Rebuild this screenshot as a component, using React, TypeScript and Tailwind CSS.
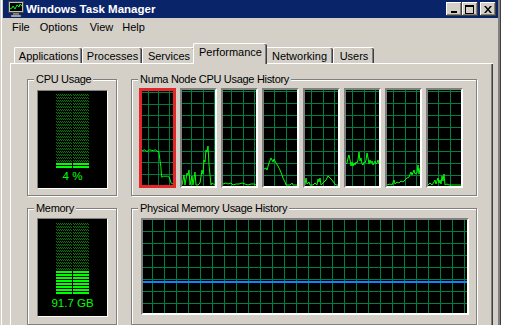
import React from 'react';

type Pt = [number, number];

// numa node history, local coords inside a 33x96 plot
const cpuHistory: { phase: number; pts: Pt[] }[] = [
  {
    phase: 6,
    pts: [[0, 61], [3, 60], [5, 62], [8, 60], [12, 61], [14, 60], [17, 62], [18, 62], [19, 70], [20, 77], [21, 88], [23, 87], [27, 87], [29, 88], [31, 94], [33, 95]],
  },
  {
    phase: 9,
    pts: [[0, 95], [2, 85], [3, 95], [5, 83], [6, 85], [7, 80], [8, 95], [10, 86], [11, 95], [13, 82], [14, 95], [16, 95], [18, 93], [20, 80], [21, 84], [22, 70], [23, 72], [24, 60], [25, 62], [26, 56], [27, 75], [28, 85], [29, 95], [30, 93], [33, 95]],
  },
  {
    phase: 8,
    pts: [[0, 94], [3, 93], [5, 94], [8, 93], [10, 95], [13, 94], [16, 94], [19, 93], [22, 94], [25, 95], [28, 94], [31, 94], [33, 95]],
  },
  {
    phase: 10,
    pts: [[0, 79], [2, 78], [3, 80], [5, 73], [7, 68], [8, 70], [9, 72], [10, 69], [12, 73], [14, 76], [16, 80], [18, 85], [19, 88], [21, 92], [22, 95], [26, 95], [28, 93], [29, 95], [33, 95]],
  },
  {
    phase: 6,
    pts: [[0, 95], [1, 88], [2, 94], [4, 92], [5, 95], [8, 95], [10, 93], [12, 95], [13, 89], [14, 92], [15, 88], [16, 95], [18, 93], [21, 90], [23, 86], [25, 88], [27, 90], [29, 93], [31, 95], [33, 95]],
  },
  {
    phase: 6,
    pts: [[0, 74], [1, 73], [2, 68], [3, 65], [4, 70], [5, 76], [6, 72], [7, 76], [8, 73], [9, 75], [10, 72], [11, 73], [12, 70], [13, 62], [14, 71], [15, 68], [16, 74], [17, 75], [18, 72], [19, 73], [20, 70], [21, 63], [22, 68], [23, 74], [24, 70], [25, 73], [26, 71], [27, 75], [28, 73], [29, 71], [30, 74], [31, 73], [32, 70], [33, 74]],
  },
  {
    phase: 6,
    pts: [[0, 95], [3, 94], [5, 95], [7, 90], [8, 94], [10, 92], [12, 93], [14, 91], [16, 92], [18, 90], [20, 88], [22, 87], [24, 82], [25, 85], [27, 80], [28, 84], [30, 83], [31, 75], [32, 84], [33, 78]],
  },
  {
    phase: 10,
    pts: [[0, 95], [2, 93], [4, 95], [6, 92], [7, 90], [8, 94], [10, 88], [11, 93], [12, 90], [13, 94], [14, 86], [15, 91], [16, 84], [17, 95], [19, 94], [21, 95], [33, 95]],
  },
];

function CpuGraph({ phase, pts, selected }: { phase: number; pts: Pt[]; selected?: boolean }) {
  return (
    <div
      className={`h-[100px] w-[37px] bg-black ${
        selected
          ? 'border-[3px] border-[#e3262a]'
          : 'border-2 border-t-[#808080] border-l-[#808080] border-r-white border-b-white'
      }`}
    >
      <svg viewBox="0 0 33 96" preserveAspectRatio="none" className="block h-full w-full">
        {[0, 1, 2].map(i => (
          <line key={'v' + i} x1={phase + 0.5 + i * 11.5} x2={phase + 0.5 + i * 11.5} y1={0} y2={96} stroke="#008040" shapeRendering="crispEdges" />
        ))}
        {[0, 1, 2, 3, 4, 5, 6, 7].map(i => (
          <line key={'h' + i} x1={0} x2={33} y1={1.5 + i * 12} y2={1.5 + i * 12} stroke="#008040" shapeRendering="crispEdges" />
        ))}
        <polyline points={pts.map(p => p.join(',')).join(' ')} fill="none" stroke="#00ff00" strokeWidth={1} />
      </svg>
    </div>
  );
}

function MemGraph() {
  return (
    <div className="h-[97px] w-[328px] border-2 border-t-[#808080] border-l-[#808080] border-r-white border-b-white bg-black">
      <svg width={324} height={93} className="block">
        {Array.from({ length: 27 }).map((_, i) => (
          <line key={'v' + i} x1={9.5 + i * 12} x2={9.5 + i * 12} y1={0} y2={93} stroke="#008040" shapeRendering="crispEdges" />
        ))}
        {Array.from({ length: 7 }).map((_, i) => (
          <line key={'h' + i} x1={0} x2={324} y1={11.5 + i * 12} y2={11.5 + i * 12} stroke="#008040" shapeRendering="crispEdges" />
        ))}
        <rect x={0} y={61} width={324} height={2} fill="#0a84ff" />
      </svg>
    </div>
  );
}

// one 2px bar row: lit = solid, otherwise a checkered dim row
function BarRow({ y, x, on }: { y: number; x: number; on: boolean }) {
  if (on) return <rect x={x} y={y} width={16} height={2} fill="#00ff00" />;
  return (
    <g stroke="#008000" strokeWidth={1} strokeDasharray="1 1">
      <line x1={x} x2={x + 16} y1={y + 0.5} y2={y + 0.5} />
      <line x1={x + 1} x2={x + 16} y1={y + 1.5} y2={y + 1.5} />
    </g>
  );
}

function Meter({ rows, lit, top, gap, label }: { rows: number; lit: number; top: string; gap: string; label: string }) {
  return (
    <div className="flex h-[99px] w-[71px] flex-col items-center border border-t-[#808080] border-l-[#808080] border-r-white border-b-white bg-black">
      <svg width={33} height={rows * 3} className={`block ${top}`} shapeRendering="crispEdges">
        {Array.from({ length: rows }).map((_, i) => {
          const on = i >= rows - lit;
          return (
            <g key={i}>
              <BarRow x={0} y={i * 3} on={on} />
              <BarRow x={17} y={i * 3} on={on} />
            </g>
          );
        })}
      </svg>
      <span className={`${gap} text-[11.5px] leading-[13px] text-[#00ff00]`}>{label}</span>
    </div>
  );
}

function GroupBox({ label, className, children }: { label: string; className: string; children: React.ReactNode }) {
  return (
    <div className={`relative shrink-0 border border-[#808080] shadow-[inset_1px_1px_0_#fff,1px_1px_0_#fff] ${className}`}>
      <span className="absolute left-[6px] top-[-7px] bg-[#d4d0c8] px-[2px] text-[11px] leading-[13px] tracking-[-0.3px] text-black">
        {label}
      </span>
      {children}
    </div>
  );
}

function CaptionButton({ children, className = '' }: { children: React.ReactNode; className?: string }) {
  return (
    <div
      className={`flex h-[14px] w-[16px] items-center justify-center bg-[#d4d0c8] shadow-[inset_-1px_-1px_0_#404040,inset_1px_1px_0_#fff,inset_-2px_-2px_0_#808080] ${className}`}
    >
      {children}
    </div>
  );
}

const tabs = [
  { name: 'Applications', w: 'w-[68px]' },
  { name: 'Processes', w: 'w-[60px]' },
  { name: 'Services', w: 'w-[53px]' },
  { name: 'Performance', w: 'w-[74px]', active: true },
  { name: 'Networking', w: 'w-[68px]' },
  { name: 'Users', w: 'w-[41px]' },
];

export default function App() {
  return (
    <div className="h-[325px] w-[505px] overflow-hidden bg-white font-['Liberation_Sans',Arial,sans-serif]">
      <div className="flex h-[325px] w-[501px] flex-col bg-[#d4d0c8] px-[3px] shadow-[inset_1px_0_0_#d4d0c8,inset_2px_0_0_#fff,inset_-1px_0_0_#404040,inset_-3px_0_0_#808080]">
        {/* title bar */}
        <div className="flex h-[18px] shrink-0 items-center bg-[#0a246a] pr-[2px]">
          <svg width={16} height={16} viewBox="0 0 16 16" className="ml-[5px]">
            <rect x={0.5} y={0.5} width={15} height={11} fill="#c0c0c0" stroke="#404040" />
            <rect x={2} y={2} width={12} height={8} fill="#000" />
            <polyline points="2,8 4,7 5,5 7,8 9,4 11,6 12,3 14,5" fill="none" stroke="#00ff00" strokeWidth={1} />
            <rect x={5} y={12} width={6} height={2} fill="#808080" />
            <rect x={3} y={14} width={10} height={2} fill="#c0c0c0" stroke="#404040" strokeWidth={0.5} />
          </svg>
          <span className="ml-[2px] text-[11.5px] font-bold leading-[14px] text-white">Windows Task Manager</span>
          <div className="ml-auto flex">
            <CaptionButton>
              <div className="mt-[6px] mr-[1px] h-[2px] w-[6px] bg-black" />
            </CaptionButton>
            <CaptionButton>
              <div className="mr-[1px] h-[9px] w-[9px] border border-t-2 border-black" />
            </CaptionButton>
            <CaptionButton className="ml-[2px]">
              <svg width={8} height={7} viewBox="0 0 8 7" className="mr-[1px]">
                <path d="M0,0 L2,0 L4,2.5 L6,0 L8,0 L5,3.5 L8,7 L6,7 L4,4.5 L2,7 L0,7 L3,3.5 Z" fill="#000" />
              </svg>
            </CaptionButton>
          </div>
        </div>

        {/* menu bar */}
        <div className="flex h-[19px] shrink-0 items-center text-[11px] leading-[13px] text-black">
          <span className="ml-[9px]">File</span>
          <span className="ml-[10px]">Options</span>
          <span className="ml-[12px]">View</span>
          <span className="ml-[9px]">Help</span>
        </div>

        {/* tabs */}
        <div className="mt-[6px] flex h-[20px] shrink-0 items-end pl-[11px]">
          {tabs.map(t =>
            t.active ? (
              <div
                key={t.name}
                className={`relative z-10 -mx-[2px] -mb-px flex h-[21px] ${t.w} items-start justify-center rounded-t-[2px] border-l border-t border-white bg-[#d4d0c8] pt-[2px] text-[11px] leading-[13px] shadow-[inset_-1px_0_0_#404040,inset_-2px_0_0_#808080]`}
              >
                {t.name}
              </div>
            ) : (
              <div
                key={t.name}
                className={`flex h-[16px] ${t.w} items-start justify-center rounded-t-[2px] border-l border-t border-white pt-[2px] text-[11px] leading-[13px] shadow-[inset_-1px_0_0_#404040,inset_-2px_0_0_#808080]`}
              >
                {t.name}
              </div>
            ),
          )}
        </div>

        {/* performance page */}
        <div className="ml-[7px] min-h-0 w-[483px] flex-1 border-l border-t border-white pl-[16px] pt-[15px] shadow-[inset_-1px_0_0_#404040,inset_-2px_0_0_#808080]">
          <div className="flex gap-[14px]">
            <GroupBox label="CPU Usage" className="h-[117px] w-[90px] pl-[9px] pt-[10px]">
              <Meter rows={25} lit={2} top="mt-[3px]" gap="mt-[1px]" label="4 %" />
            </GroupBox>
            <GroupBox label="Numa Node CPU Usage History" className="h-[117px] w-[346px] pl-[7px] pt-[8px]">
              <div className="flex gap-[4px]">
                {cpuHistory.map((g, i) => (
                  <CpuGraph key={i} phase={g.phase} pts={g.pts} selected={i === 0} />
                ))}
              </div>
            </GroupBox>
          </div>
          <div className="mt-[12px] flex gap-[14px]">
            <GroupBox label="Memory" className="h-[117px] w-[90px] pl-[9px] pt-[9px]">
              <Meter rows={24} lit={8} top="mt-[4px]" gap="mt-[2px]" label="91.7 GB" />
            </GroupBox>
            <GroupBox label="Physical Memory Usage History" className="h-[117px] w-[346px] pl-[9px] pt-[9px]">
              <MemGraph />
            </GroupBox>
          </div>
        </div>
      </div>
    </div>
  );
}
